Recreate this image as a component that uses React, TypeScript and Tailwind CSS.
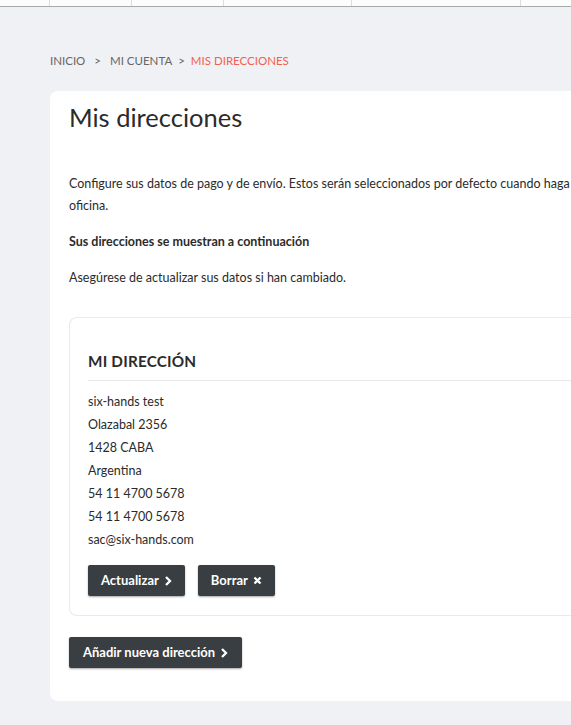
import React from "react";

const ChevronRight: React.FC = () => (
  <svg width="8" height="10" viewBox="0 0 8 10" className="ml-[5px] inline-block">
    <path d="M2 1l4 4-4 4" fill="none" stroke="currentColor" strokeWidth="2.3" />
  </svg>
);

const Cross: React.FC = () => (
  <svg width="9" height="9" viewBox="0 0 9 9" className="ml-[5px] inline-block">
    <path d="M1.5 1.5l6 6M7.5 1.5l-6 6" fill="none" stroke="currentColor" strokeWidth="2.3" />
  </svg>
);

const addressLines = [
  "six-hands test",
  "Olazabal 2356",
  "1428 CABA",
  "Argentina",
  "54 11 4700 5678",
  "54 11 4700 5678",
  "sac@six-hands.com",
];

const DarkButton: React.FC<{ children: React.ReactNode; wide?: boolean }> = ({ children, wide }) => (
  <button
    className={
      "flex items-center h-[31px] bg-[#383e42] text-white text-[13px] font-bold rounded-[2px] shadow-[0_1px_2px_rgba(0,0,0,0.35)] " +
      (wide ? "px-[14px]" : "px-[13px]")
    }
  >
    {children}
  </button>
);

export default function App() {
  return (
    <div
      className="min-h-[725px] bg-[#f0f1f5] text-[#2b2b2b] overflow-hidden"
      style={{ fontFamily: "Lato, 'Noto Sans', sans-serif" }}
    >
      {/* top nav strip */}
      <div className="flex h-[7px] bg-[#fcfcfc] border-b border-[#a9a9a9]">
        <div className="w-[50px] border-r border-[#ddd]" />
        <div className="w-[82px] border-r border-[#ddd]" />
        <div className="w-[92px] border-r border-[#ddd]" />
        <div className="w-[128px] border-r border-[#ddd]" />
        <div className="w-[169px] border-r border-[#ddd]" />
      </div>

      <div className="pl-[50px]">
        <nav className="flex items-center pt-[39px] text-[11.5px] uppercase text-[#666] h-[68px]">
          <span>Inicio</span>
          <span className="mx-[9px]">&gt;</span>
          <span>Mi cuenta</span>
          <span className="mx-[6px]">&gt;</span>
          <span className="text-[#f0624d]">Mis direcciones</span>
        </nav>

        <div className="mt-[16px] w-[560px] bg-white rounded-l-[8px] pl-[19px] pt-[11px] pb-[33px]">
          <h1 className="text-[25.5px] leading-[30px] text-[#2b2b2b]">Mis direcciones</h1>

          <div className="mt-[41px] text-[12.5px] leading-[22px] whitespace-nowrap">
            <p>Configure sus datos de pago y de envío. Estos serán seleccionados por defecto cuando haga un pedido en nuestra</p>
            <p>oficina.</p>
            <p className="mt-[14px] font-bold">Sus direcciones se muestran a continuación</p>
            <p className="mt-[14px]">Asegúrese de actualizar sus datos si han cambiado.</p>
          </div>

          <div className="mt-[28px] border border-r-0 border-[#e9e9ee] rounded-l-[8px] pl-[18px] pt-[31px] pb-[19px]">
            <h2 className="text-[15.3px] font-bold uppercase tracking-[0.2px] leading-[24px] pb-[7px] border-b border-[#e6e6eb]">
              Mi dirección
            </h2>
            <ul className="mt-[9px] text-[12.5px] leading-[23px]">
              {addressLines.map((line, i) => (
                <li key={i}>{line}</li>
              ))}
            </ul>
            <div className="mt-[14px] flex gap-[13px]">
              <DarkButton>
                Actualizar <ChevronRight />
              </DarkButton>
              <DarkButton>
                Borrar <Cross />
              </DarkButton>
            </div>
          </div>

          <div className="mt-[21px]">
            <DarkButton wide>
              Añadir nueva dirección <ChevronRight />
            </DarkButton>
          </div>
        </div>
      </div>
    </div>
  );
}
